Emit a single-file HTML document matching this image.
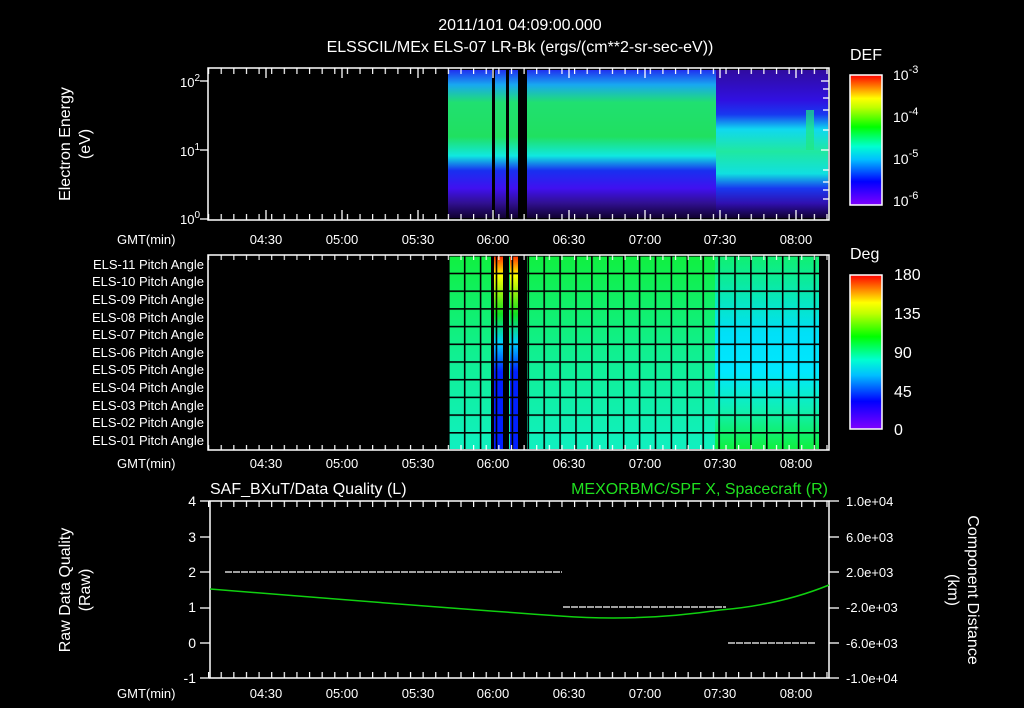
<!DOCTYPE html>
<html><head><meta charset="utf-8"><style>
html,body{margin:0;padding:0;background:#000;width:1024px;height:708px;overflow:hidden}
svg{display:block}
text{font-family:"Liberation Sans",sans-serif;fill:#fff;font-size:14px}
.s{font-size:13px}
</style></head><body>
<svg width="1024" height="708" viewBox="0 0 1024 708">
<defs>
<linearGradient id="spec1" x1="0" y1="0" x2="0" y2="1">
<stop offset="0" stop-color="#2030f0"/><stop offset="0.1" stop-color="#18a8f0"/>
<stop offset="0.22" stop-color="#20e070"/><stop offset="0.45" stop-color="#20e060"/>
<stop offset="0.58" stop-color="#10e8e0"/><stop offset="0.68" stop-color="#1830f0"/>
<stop offset="0.8" stop-color="#4010f0"/><stop offset="0.9" stop-color="#301090"/><stop offset="1" stop-color="#100030"/>
</linearGradient>
<linearGradient id="spec2" x1="0" y1="0" x2="0" y2="1">
<stop offset="0" stop-color="#300ca0"/><stop offset="0.2" stop-color="#3010e0"/>
<stop offset="0.3" stop-color="#1838f0"/><stop offset="0.4" stop-color="#10d8f0"/>
<stop offset="0.55" stop-color="#20e8a0"/><stop offset="0.7" stop-color="#10e0e0"/>
<stop offset="0.8" stop-color="#1838f0"/><stop offset="0.9" stop-color="#3010b0"/><stop offset="1" stop-color="#100030"/>
</linearGradient>
<linearGradient id="cb1" x1="0" y1="1" x2="0" y2="0">
<stop offset="0" stop-color="#8000ff"/><stop offset="0.18" stop-color="#0000ff"/>
<stop offset="0.35" stop-color="#00c0ff"/><stop offset="0.45" stop-color="#00ffd0"/>
<stop offset="0.6" stop-color="#00ff00"/><stop offset="0.75" stop-color="#c0ff00"/>
<stop offset="0.82" stop-color="#ffff00"/><stop offset="1" stop-color="#ff0000"/>
</linearGradient>
<linearGradient id="pa" x1="0" y1="0" x2="0" y2="1">
<stop offset="0" stop-color="#10f040"/><stop offset="0.5" stop-color="#10f090"/><stop offset="1" stop-color="#10f0c0"/>
</linearGradient>
<linearGradient id="pa2" x1="0" y1="0" x2="0" y2="1">
<stop offset="0" stop-color="#10f070"/><stop offset="0.4" stop-color="#00e0f8"/><stop offset="0.6" stop-color="#00e8ff"/><stop offset="0.8" stop-color="#10f0b0"/><stop offset="1" stop-color="#10f040"/>
</linearGradient>
<linearGradient id="spike" x1="0" y1="0" x2="0" y2="1">
<stop offset="0" stop-color="#ff3000"/><stop offset="0.1" stop-color="#ffff00"/><stop offset="0.3" stop-color="#10e020"/><stop offset="0.45" stop-color="#00d0ff"/><stop offset="0.6" stop-color="#0020ff"/><stop offset="1" stop-color="#0020ff"/>
</linearGradient>
<pattern id="tk" x="208" y="0" width="12.62" height="708" patternUnits="userSpaceOnUse">
<rect x="0" y="0" width="1.2" height="708" fill="#fff"/></pattern>
<pattern id="grid" x="448" y="255" width="15.9" height="17.7" patternUnits="userSpaceOnUse">
<rect x="0" y="0" width="15.9" height="1.6" fill="#000"/><rect x="0" y="0" width="1.6" height="17.7" fill="#000"/></pattern>
</defs>

<text x="520" y="30" text-anchor="middle" style="font-size:16px">2011/101 04:09:00.000</text>
<text x="520" y="52" text-anchor="middle" style="font-size:16px">ELSSCIL/MEx ELS-07 LR-Bk  (ergs/(cm**2-sr-sec-eV))</text>

<!-- panel 1 -->
<rect x="448" y="70" width="268" height="148" fill="url(#spec1)"/>
<rect x="716" y="70" width="112" height="148" fill="url(#spec2)"/>
<rect x="492" y="70" width="3" height="148" fill="#000"/>
<rect x="506" y="70" width="3" height="148" fill="#000"/>
<rect x="518" y="70" width="9" height="148" fill="#000"/>
<rect x="806" y="110" width="8" height="40" fill="#20e880" opacity="0.7"/>
<rect x="208" y="68" width="621" height="152" fill="none" stroke="#fff" stroke-width="1.5"/>
<rect x="208" y="68" width="621" height="6" fill="url(#tk)"/>
<rect x="208" y="214" width="621" height="6" fill="url(#tk)"/>
<g stroke="#fff" stroke-width="1.3">
<line x1="266" y1="68" x2="266" y2="78"/><line x1="342" y1="68" x2="342" y2="78"/><line x1="418" y1="68" x2="418" y2="78"/><line x1="493" y1="68" x2="493" y2="78"/><line x1="569" y1="68" x2="569" y2="78"/><line x1="645" y1="68" x2="645" y2="78"/><line x1="720" y1="68" x2="720" y2="78"/><line x1="796" y1="68" x2="796" y2="78"/>
<line x1="266" y1="210" x2="266" y2="220"/><line x1="342" y1="210" x2="342" y2="220"/><line x1="418" y1="210" x2="418" y2="220"/><line x1="493" y1="210" x2="493" y2="220"/><line x1="569" y1="210" x2="569" y2="220"/><line x1="645" y1="210" x2="645" y2="220"/><line x1="720" y1="210" x2="720" y2="220"/><line x1="796" y1="210" x2="796" y2="220"/>
<line x1="200" y1="81" x2="208" y2="81"/><line x1="200" y1="150" x2="208" y2="150"/><line x1="200" y1="219" x2="208" y2="219"/>
<line x1="821" y1="81" x2="829" y2="81"/><line x1="821" y1="150" x2="829" y2="150"/>
<line x1="823" y1="89" x2="829" y2="89"/><line x1="823" y1="98" x2="829" y2="98"/><line x1="823" y1="110" x2="829" y2="110"/><line x1="823" y1="130" x2="829" y2="130"/><line x1="823" y1="170" x2="829" y2="170"/><line x1="823" y1="182" x2="829" y2="182"/><line x1="823" y1="190" x2="829" y2="190"/><line x1="823" y1="199" x2="829" y2="199"/>
</g>
<text x="180" y="87" class="s">10<tspan dy="-6" font-size="10">2</tspan></text>
<text x="180" y="156" class="s">10<tspan dy="-6" font-size="10">1</tspan></text>
<text x="180" y="224" class="s">10<tspan dy="-6" font-size="10">0</tspan></text>
<text transform="translate(70,144) rotate(-90)" text-anchor="middle" style="font-size:16px">Electron Energy</text>
<text transform="translate(90,144) rotate(-90)" text-anchor="middle" style="font-size:16px">(eV)</text>
<text x="117" y="244" class="s">GMT(min)</text>
<text x="266" y="244" class="s" text-anchor="middle">04:30</text><text x="342" y="244" class="s" text-anchor="middle">05:00</text><text x="418" y="244" class="s" text-anchor="middle">05:30</text><text x="493" y="244" class="s" text-anchor="middle">06:00</text><text x="569" y="244" class="s" text-anchor="middle">06:30</text><text x="645" y="244" class="s" text-anchor="middle">07:00</text><text x="720" y="244" class="s" text-anchor="middle">07:30</text><text x="796" y="244" class="s" text-anchor="middle">08:00</text>
<text x="850" y="60" style="font-size:16px">DEF</text>
<rect x="850" y="75" width="32" height="130" fill="url(#cb1)" stroke="#fff" stroke-width="1.5"/>
<text x="893" y="80">10<tspan dy="-7" font-size="11">-3</tspan></text>
<text x="893" y="122">10<tspan dy="-7" font-size="11">-4</tspan></text>
<text x="893" y="164">10<tspan dy="-7" font-size="11">-5</tspan></text>
<text x="893" y="206">10<tspan dy="-7" font-size="11">-6</tspan></text>

<!-- panel 2 -->
<rect x="448" y="256" width="268" height="193" fill="url(#pa)"/>
<rect x="715" y="256" width="104" height="193" fill="url(#pa2)"/>
<rect x="494" y="256" width="9" height="193" fill="url(#spike)"/>
<rect x="510" y="256" width="8" height="193" fill="url(#spike)"/>
<rect x="448" y="255" width="371" height="195" fill="url(#grid)"/>
<rect x="491" y="256" width="3" height="193" fill="#000"/>
<rect x="503" y="256" width="6" height="193" fill="#000"/>
<rect x="518" y="256" width="9" height="193" fill="#000"/>
<rect x="208" y="255" width="621" height="195" fill="none" stroke="#fff" stroke-width="1.5"/>
<rect x="208" y="255" width="621" height="5" fill="url(#tk)" opacity="0.9"/>
<rect x="208" y="445" width="621" height="5" fill="url(#tk)"/>
<text x="204" y="269" text-anchor="end" class="s">ELS-11 Pitch Angle</text>
<text x="204" y="286" text-anchor="end" class="s">ELS-10 Pitch Angle</text>
<text x="204" y="304" text-anchor="end" class="s">ELS-09 Pitch Angle</text>
<text x="204" y="322" text-anchor="end" class="s">ELS-08 Pitch Angle</text>
<text x="204" y="339" text-anchor="end" class="s">ELS-07 Pitch Angle</text>
<text x="204" y="357" text-anchor="end" class="s">ELS-06 Pitch Angle</text>
<text x="204" y="374" text-anchor="end" class="s">ELS-05 Pitch Angle</text>
<text x="204" y="392" text-anchor="end" class="s">ELS-04 Pitch Angle</text>
<text x="204" y="410" text-anchor="end" class="s">ELS-03 Pitch Angle</text>
<text x="204" y="427" text-anchor="end" class="s">ELS-02 Pitch Angle</text>
<text x="204" y="445" text-anchor="end" class="s">ELS-01 Pitch Angle</text>
<text x="117" y="468" class="s">GMT(min)</text>
<text x="266" y="468" class="s" text-anchor="middle">04:30</text><text x="342" y="468" class="s" text-anchor="middle">05:00</text><text x="418" y="468" class="s" text-anchor="middle">05:30</text><text x="493" y="468" class="s" text-anchor="middle">06:00</text><text x="569" y="468" class="s" text-anchor="middle">06:30</text><text x="645" y="468" class="s" text-anchor="middle">07:00</text><text x="720" y="468" class="s" text-anchor="middle">07:30</text><text x="796" y="468" class="s" text-anchor="middle">08:00</text>
<text x="850" y="259" style="font-size:16px">Deg</text>
<rect x="850" y="275" width="32" height="154" fill="url(#cb1)" stroke="#fff" stroke-width="1.5"/>
<text x="894" y="280" style="font-size:16px">180</text>
<text x="894" y="319" style="font-size:16px">135</text>
<text x="894" y="358" style="font-size:16px">90</text>
<text x="894" y="397" style="font-size:16px">45</text>
<text x="894" y="435" style="font-size:16px">0</text>

<!-- panel 3 -->
<text x="210" y="494" style="font-size:16px">SAF_BXuT/Data Quality (L)</text>
<text x="828" y="494" text-anchor="end" style="font-size:16px;fill:#20e020">MEXORBMC/SPF X, Spacecraft (R)</text>
<rect x="210" y="501" width="619" height="177" fill="none" stroke="#fff" stroke-width="1.5"/>
<rect x="208" y="501" width="621" height="6" fill="url(#tk)"/>
<rect x="208" y="672" width="621" height="6" fill="url(#tk)"/>
<g stroke="#fff" stroke-width="1.3">
<line x1="200" y1="501" x2="210" y2="501"/><line x1="200" y1="537" x2="210" y2="537"/><line x1="200" y1="572" x2="210" y2="572"/><line x1="200" y1="608" x2="210" y2="608"/><line x1="200" y1="643" x2="210" y2="643"/><line x1="200" y1="678" x2="210" y2="678"/>
<line x1="829" y1="501" x2="839" y2="501"/><line x1="829" y1="537" x2="839" y2="537"/><line x1="829" y1="572" x2="839" y2="572"/><line x1="829" y1="608" x2="839" y2="608"/><line x1="829" y1="643" x2="839" y2="643"/><line x1="829" y1="678" x2="839" y2="678"/>
</g>
<g stroke="#fff" stroke-width="1.3">
<line x1="225" y1="572" x2="562" y2="572" stroke-dasharray="7 1"/>
<line x1="563" y1="607" x2="726" y2="607" stroke-dasharray="7 1"/>
<line x1="728" y1="643" x2="815" y2="643" stroke-dasharray="7 1"/>
</g>
<path d="M210 589 Q 420 606 560 616 Q 640 622 720 610 Q 780 605 829 585" fill="none" stroke="#10d010" stroke-width="1.5"/>
<text x="196" y="506" text-anchor="end">4</text><text x="196" y="542" text-anchor="end">3</text><text x="196" y="577" text-anchor="end">2</text><text x="196" y="612" text-anchor="end">1</text><text x="196" y="648" text-anchor="end">0</text><text x="196" y="683" text-anchor="end">-1</text>
<text x="846" y="506" class="s">1.0e+04</text><text x="846" y="542" class="s">6.0e+03</text><text x="846" y="577" class="s">2.0e+03</text><text x="846" y="612" class="s">-2.0e+03</text><text x="846" y="648" class="s">-6.0e+03</text><text x="846" y="683" class="s">-1.0e+04</text>
<text transform="translate(70,590) rotate(-90)" text-anchor="middle" style="font-size:16px">Raw Data Quality</text>
<text transform="translate(90,590) rotate(-90)" text-anchor="middle" style="font-size:16px">(Raw)</text>
<text transform="translate(968,590) rotate(90)" text-anchor="middle" style="font-size:16px">Component Distance</text>
<text transform="translate(948,590) rotate(90)" text-anchor="middle" style="font-size:16px">(km)</text>
<text x="117" y="698" class="s">GMT(min)</text>
<text x="266" y="698" class="s" text-anchor="middle">04:30</text><text x="342" y="698" class="s" text-anchor="middle">05:00</text><text x="418" y="698" class="s" text-anchor="middle">05:30</text><text x="493" y="698" class="s" text-anchor="middle">06:00</text><text x="569" y="698" class="s" text-anchor="middle">06:30</text><text x="645" y="698" class="s" text-anchor="middle">07:00</text><text x="720" y="698" class="s" text-anchor="middle">07:30</text><text x="796" y="698" class="s" text-anchor="middle">08:00</text>
</svg>
</body></html>
